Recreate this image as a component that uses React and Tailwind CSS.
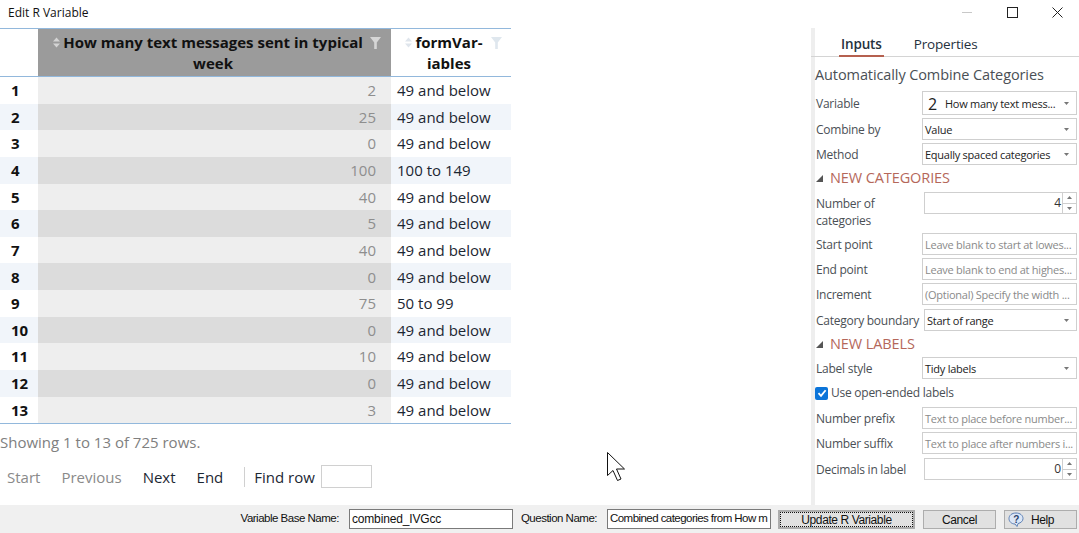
const rows = [
  [1, 2, "49 and below"],
  [2, 25, "49 and below"],
  [3, 0, "49 and below"],
  [4, 100, "100 to 149"],
  [5, 40, "49 and below"],
  [6, 5, "49 and below"],
  [7, 40, "49 and below"],
  [8, 0, "49 and below"],
  [9, 75, "50 to 99"],
  [10, 0, "49 and below"],
  [11, 10, "49 and below"],
  [12, 0, "49 and below"],
  [13, 3, "49 and below"],
];

const labelClass = "text-[12px] tracking-[-0.25px] text-[#4a4f55] leading-[16px] whitespace-nowrap";
const fieldClass = "border border-[#cfcfcf] bg-white flex items-center px-[2px] pt-[1px] text-[11px] tracking-[-0.25px] leading-none overflow-hidden whitespace-nowrap";
const headingClass = "text-[14.5px] leading-none text-[#b5675a] tracking-[-0.1px]";

function SortIcon({ light }) {
  const c = light ? "#dfe5ec" : "#d4d4d4";
  return (
    <svg width="9" height="11" viewBox="0 0 9 11" className="shrink-0">
      <path d="M4.5 0.5 L8 4.5 H1 Z" fill={c} />
      <path d="M4.5 10.5 L8 6.5 H1 Z" fill={c} />
    </svg>
  );
}

function FilterIcon({ light }) {
  return (
    <svg width="11" height="12" viewBox="0 0 11 12" className="shrink-0">
      <path d="M0 0 H11 L6.8 5.5 V12 H4.2 V5.5 Z" fill={light ? "#dfe7ee" : "#d6d6d6"} />
    </svg>
  );
}

function Caret() {
  return (
    <svg width="5" height="3" viewBox="0 0 5 3" className="ml-auto mr-[5px] shrink-0">
      <path d="M0 0 H5 L2.5 3 Z" fill="#777" />
    </svg>
  );
}

function Triangle() {
  return (
    <svg width="7" height="7" viewBox="0 0 7 7" className="shrink-0">
      <path d="M7 0 V7 H0 Z" fill="#555" />
    </svg>
  );
}

function SelectField({ className, children }) {
  return (
    <div className={`${fieldClass} text-[#222] ${className}`}>
      <span>{children}</span>
      <Caret />
    </div>
  );
}

function TextField({ className, children }) {
  return <div className={`${fieldClass} text-[#8a8a8a] ${className}`}>{children}</div>;
}

function Spinner({ value }) {
  return (
    <div className="flex h-[22px] ml-[2px]">
      <div className="w-[139px] border border-[#cfcfcf] flex items-center justify-end pr-[1px] text-[12px] text-[#333]">{value}</div>
      <div className="w-[14px] flex flex-col border-y border-r border-[#cfcfcf]">
        <div className="flex-1 flex items-center justify-center border-b border-[#cfcfcf]">
          <svg width="5" height="3" viewBox="0 0 5 3"><path d="M0 3 H5 L2.5 0 Z" fill="#777" /></svg>
        </div>
        <div className="flex-1 flex items-center justify-center">
          <svg width="5" height="3" viewBox="0 0 5 3"><path d="M0 0 H5 L2.5 3 Z" fill="#777" /></svg>
        </div>
      </div>
    </div>
  );
}

function FormRow({ label, className, children }) {
  return (
    <div className={`flex pl-[1px] ${className}`}>
      <div className={`${labelClass} w-[106px] shrink-0 self-center pt-[2px]`}>{label}</div>
      <div className="flex-1 min-w-0">{children}</div>
    </div>
  );
}

function WinButton({ className, children }) {
  return (
    <div className={`h-[19px] mt-[1px] border border-[#adadad] bg-[#e1e1e1] flex items-center text-[12px] tracking-[-0.4px] text-[#111] ${className}`}>
      {children}
    </div>
  );
}

export default function App() {
  return (
    <div className="relative w-[1079px] h-[533px] overflow-hidden bg-white flex flex-col font-['Open_Sans',sans-serif]">
      {/* title bar */}
      <div className="h-[28px] shrink-0 flex items-start">
        <div className="pl-[8px] pt-[6px] text-[12px] leading-[14px] text-[#111]">Edit R Variable</div>
        <div className="ml-auto flex items-center pt-[7px] pr-[16px]">
          <div className="w-[10px] h-px bg-[#c8c8c8]" />
          <div className="w-[11px] h-[11px] border border-[#222] ml-[35px]" />
          <svg width="11" height="11" viewBox="0 0 11 11" className="ml-[34px]">
            <path d="M0.5 0.5 L10.5 10.5 M10.5 0.5 L0.5 10.5" stroke="#222" strokeWidth="1" />
          </svg>
        </div>
      </div>

      <div className="flex flex-1 min-h-0">
        {/* data table */}
        <div className="w-[511px] shrink-0 flex flex-col">
          <div className="flex h-[49px] border-y border-[#92b8dc] box-border">
            <div className="w-[38px]" />
            <div className="w-[353px] bg-[#9b9b9b] flex items-start pl-[14px] pr-[10px] pt-[3px]">
              <div className="mt-[5px]"><SortIcon /></div>
              <div className="flex-1 text-center text-[15px] leading-[21px] font-bold text-[#111]">
                How many text messages sent in typical week
              </div>
              <div className="mt-[5px] ml-[5px]"><FilterIcon /></div>
            </div>
            <div className="w-[120px] flex items-start pl-[13px] pr-[9px] pt-[3px]">
              <div className="mt-[5px]"><SortIcon light /></div>
              <div className="flex-1 text-center text-[15px] leading-[21px] font-bold text-[#111] pr-[6px]">
                formVar-<br />iables
              </div>
              <div className="mt-[5px]"><FilterIcon light /></div>
            </div>
          </div>
          <div className="border-b border-[#92b8dc]">
            {rows.map(([n, count, band], i) => (
              <div key={n} className={`flex h-[26.65px] items-center text-[15px] ${i % 2 ? "bg-[#f1f5fa]" : "bg-white"}`}>
                <div className="w-[38px] pl-[11px] font-bold text-[#111]">{n}</div>
                <div className={`w-[353px] h-full flex items-center justify-end pr-[15px] text-[#8e8e8e] ${i % 2 ? "bg-[#dcdcdc]" : "bg-[#eeeeee]"}`}>
                  {count}
                </div>
                <div className="w-[120px] pl-[6px] text-[#1c2733] whitespace-nowrap">{band}</div>
              </div>
            ))}
          </div>
          <div className="mt-[8px] text-[15px] leading-[20px] text-[#808080]">Showing 1 to 13 of 725 rows.</div>
          <div className="flex items-center mt-[13px] pl-[7px] text-[15px] leading-[22px] h-[23px]">
            <span className="text-[#8a8a8a]">Start</span>
            <span className="ml-[21px] text-[#8a8a8a]">Previous</span>
            <span className="ml-[21px] text-[#1c2733]">Next</span>
            <span className="ml-[21px] text-[#1c2733]">End</span>
            <div className="ml-[21px] w-px h-[20px] bg-[#d0d0d0]" />
            <span className="ml-[9px] text-[#1c2733]">Find row</span>
            <div className="ml-[6px] w-[51px] h-[23px] border border-[#d0d0d0]" />
          </div>
        </div>

        <div className="flex-1" />

        {/* inputs panel */}
        <div className="w-[268px] shrink-0 flex flex-col border-l-[4px] border-[#eeeeee]">
          <div className="h-[29px] border-b border-[#d4d4d4] flex -ml-[4px] pl-[28px] gap-[30px] text-[13.5px] tracking-[-0.15px] text-[#25313d]">
            <div className="h-[29px] px-[2px] border-b-[2px] border-[#b5604f] font-semibold pt-[7px] leading-[18px]">Inputs</div>
            <div className="pt-[7px] leading-[18px]">Properties</div>
          </div>
          <div className="flex flex-col">
            <div className="mt-[9px] text-[14.5px] tracking-[-0.1px] leading-[18px] text-[#4a4f55] whitespace-nowrap">Automatically Combine Categories</div>
            <FormRow label="Variable" className="mt-[7px]">
              <div className={`${fieldClass} h-[24px] w-[155px] text-[#222]`}>
                <span className="ml-[3px] text-[16px] mr-[8px]">2</span>
                <span>How many text mess...</span>
                <Caret />
              </div>
            </FormRow>
            <FormRow label="Combine by" className="mt-[3px]">
              <SelectField className="h-[22px] w-[155px]">Value</SelectField>
            </FormRow>
            <FormRow label="Method" className="mt-[3px]">
              <SelectField className="h-[22px] w-[155px]">Equally spaced categories</SelectField>
            </FormRow>
            <div className="flex items-center gap-[7px] mt-[6px] h-[15px] pl-[1px]">
              <Triangle />
              <span className={headingClass}>NEW CATEGORIES</span>
            </div>
            <div className="flex mt-[6px] pl-[1px]">
              <div className={`${labelClass} w-[106px] shrink-0 pt-[3px] leading-[17px]`}>Number of<br />categories</div>
              <Spinner value="4" />
            </div>
            <FormRow label="Start point" className="mt-[4px]">
              <TextField className="h-[22px] w-[155px]">Leave blank to start at lowes...</TextField>
            </FormRow>
            <FormRow label="End point" className="mt-[3px]">
              <TextField className="h-[22px] w-[155px]">Leave blank to end at highes...</TextField>
            </FormRow>
            <FormRow label="Increment" className="mt-[3px]">
              <TextField className="h-[22px] w-[155px]">(Optional) Specify the width ...</TextField>
            </FormRow>
            <FormRow label="Category boundary" className="mt-[4px]">
              <SelectField className="h-[22px] w-[153px] ml-[2px]">Start of range</SelectField>
            </FormRow>
            <div className="flex items-center gap-[7px] mt-[6px] h-[15px] pl-[1px]">
              <Triangle />
              <span className={headingClass}>NEW LABELS</span>
            </div>
            <FormRow label="Label style" className="mt-[5px]">
              <SelectField className="h-[22px] w-[155px]">Tidy labels</SelectField>
            </FormRow>
            <div className="flex items-center mt-[8px] h-[12px]">
              <div className="w-[13px] h-[13px] rounded-[2px] bg-[#0b74d9] flex items-center justify-center">
                <svg width="10" height="10" viewBox="0 0 10 10"><path d="M1.5 5.2 L4 7.8 L8.6 2.2" fill="none" stroke="#fff" strokeWidth="1.8" /></svg>
              </div>
              <span className={`${labelClass} ml-[3px]`}>Use open-ended labels</span>
            </div>
            <FormRow label="Number prefix" className="mt-[8px]">
              <TextField className="h-[22px] w-[155px]">Text to place before number...</TextField>
            </FormRow>
            <FormRow label="Number suffix" className="mt-[3px]">
              <TextField className="h-[22px] w-[155px]">Text to place after numbers i...</TextField>
            </FormRow>
            <FormRow label="Decimals in label" className="mt-[4px]">
              <Spinner value="0" />
            </FormRow>
          </div>
        </div>
      </div>

      {/* bottom bar */}
      <div className="h-[28px] shrink-0 bg-[#f0f0f0] flex items-center justify-end pr-[2px] font-['Liberation_Sans',sans-serif] text-[12px] text-[#111]">
        <span className="text-[11.5px] tracking-[-0.5px]">Variable Base Name:</span>
        <div className="ml-[10px] w-[164px] h-[20px] border border-[#7a7a7a] bg-white flex items-center pl-[2px] tracking-[-0.15px]">combined_IVGcc</div>
        <span className="ml-[8px] text-[11.5px] tracking-[-0.5px]">Question Name:</span>
        <div className="ml-[10px] w-[164px] h-[20px] border border-[#7a7a7a] bg-white flex items-center pl-[2px] overflow-hidden whitespace-nowrap text-[11.5px] tracking-[-0.55px]">Combined categories from How m</div>
        <WinButton className="ml-[7px] w-[137px] justify-center border-[2px] border-[#0078d7] outline-1 outline-dotted outline-[#111] -outline-offset-[3px]">Update R Variable</WinButton>
        <WinButton className="ml-[8px] w-[73px] justify-center">Cancel</WinButton>
        <WinButton className="ml-[8px] w-[73px] pl-[3px] gap-[7px]">
          <svg width="16" height="15" viewBox="0 0 16 15">
            <path d="M8 1 C3.8 1 1 3.4 1 6.6 C1 9.6 3.6 12 7 12 L9 14.5 L10 11.6 C13 10.8 15 9 15 6.6 C15 3.4 12.2 1 8 1 Z" fill="#dbe6f6" stroke="#5b7fb5" />
            <text x="8" y="10.5" textAnchor="middle" fontSize="10" fontWeight="700" fill="#2b3f6b">?</text>
          </svg>
          Help
        </WinButton>
      </div>

      {/* mouse pointer from the capture */}
      <svg width="20" height="32" viewBox="0 0 20 32" className="absolute left-[607px] top-[452px]">
        <path d="M0.5 0.5 V23.5 L6 18.5 L10.5 28.5 L14 27 L9.5 17 H17.5 Z" fill="#fff" stroke="#111" strokeWidth="1" />
      </svg>
    </div>
  );
}
